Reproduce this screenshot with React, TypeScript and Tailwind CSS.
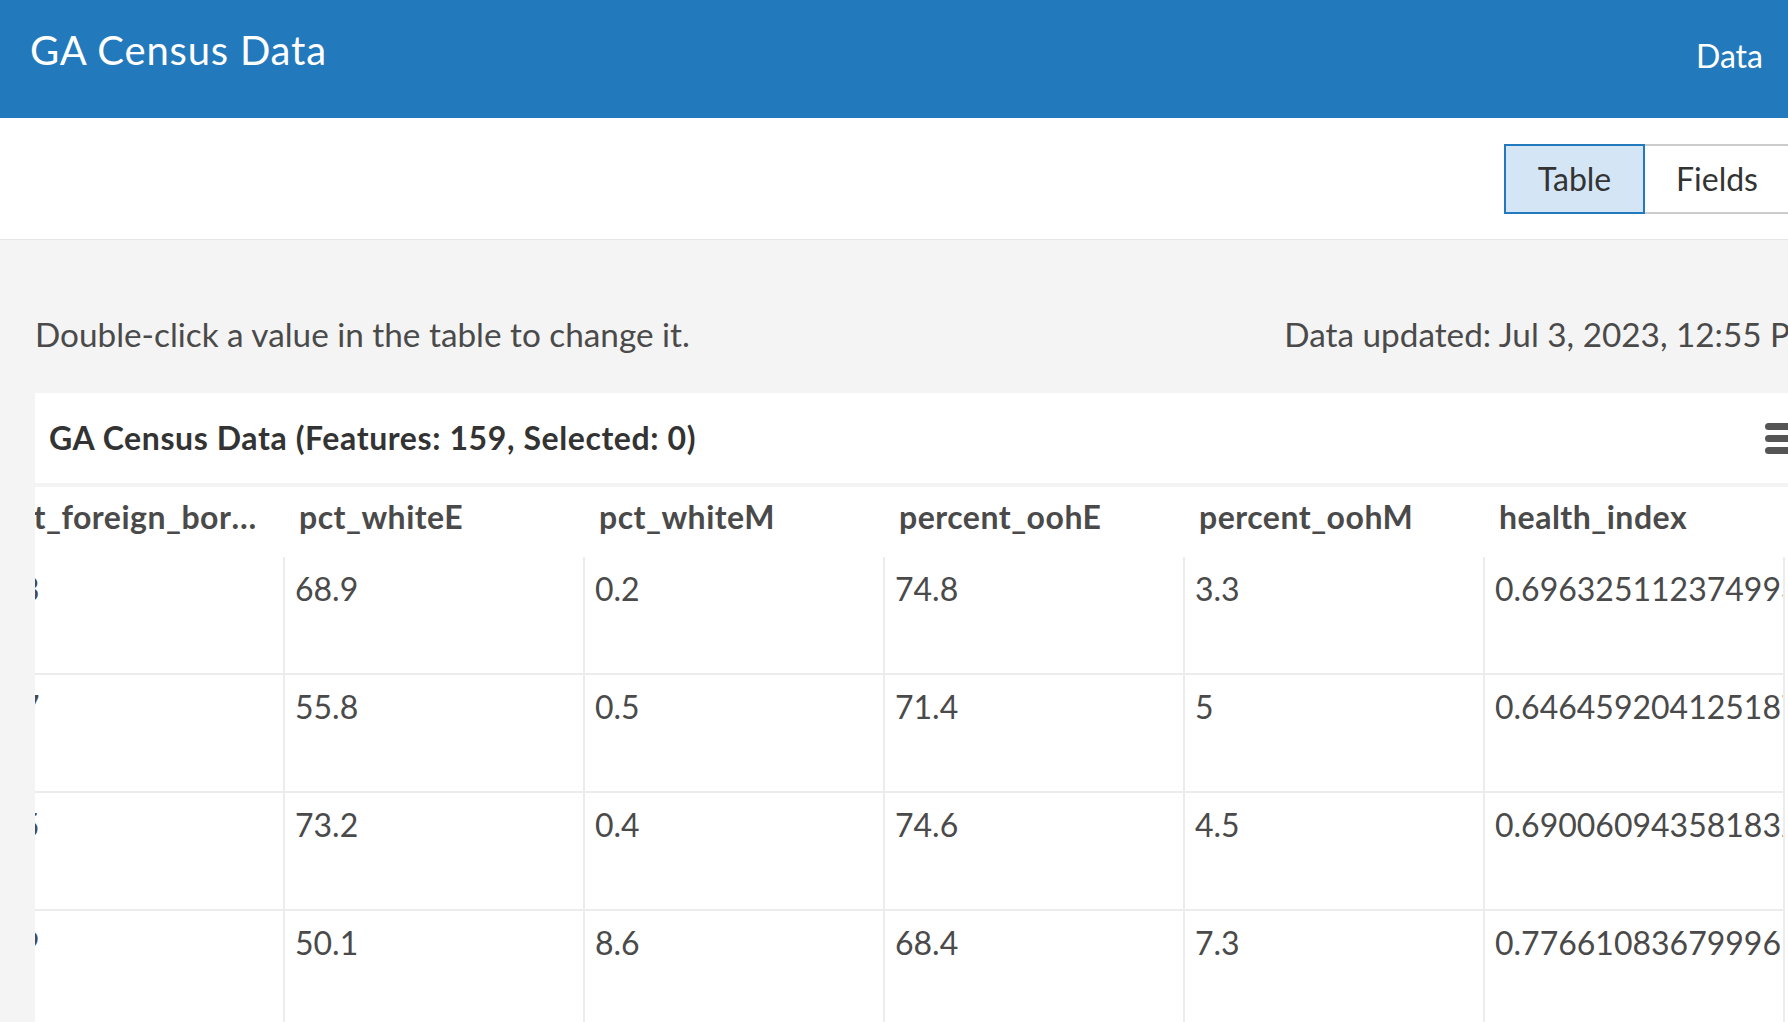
import React from 'react';

const BLUE = '#2279bb';

const columns = ['pct_foreign_bornE_pct', 'pct_whiteE', 'pct_whiteM', 'percent_oohE', 'percent_oohM', 'health_index'];

const rows = [
  ['2.3', '68.9', '0.2', '74.8', '3.3', '0.696325112374993'],
  ['4.7', '55.8', '0.5', '71.4', '5', '0.646459204125187'],
  ['1.5', '73.2', '0.4', '74.6', '4.5', '0.690060943581832'],
  ['6.9', '50.1', '8.6', '68.4', '7.3', '0.776610836799961'],
  ['3.1', '61.0', '0.9', '70.2', '2.8', '0.701223450981276'],
];

const HamburgerIcon = () => (
  <svg width="34" height="32" viewBox="0 0 34 32" fill="#555">
    <rect x="0" y="1" width="34" height="7" rx="3.5" />
    <rect x="0" y="13" width="34" height="7" rx="3.5" />
    <rect x="0" y="25" width="34" height="7" rx="3.5" />
  </svg>
);

export default function App() {
  return (
    <div className="w-[1788px] h-[1022px] overflow-hidden bg-[#f4f4f4] text-[#4a4a4a]" style={{ fontFamily: 'Lato, "Noto Sans", sans-serif' }}>
      {/* Header */}
      <header style={{ backgroundColor: BLUE }} className="h-[118px] flex justify-between text-white pl-[30px] pr-[25px]">
        <h1 className="text-[40px] leading-none pt-[30px] font-normal tracking-[0.8px]">GA Census Data</h1>
        <span className="text-[32px] leading-none pt-[40px]">Data</span>
      </header>

      <div className="w-[1844px]">
        {/* Toolbar */}
        <div className="h-[122px] bg-white border-b border-[#e6e6e6] flex items-center justify-end pr-[53px]">
          <div className="flex h-[70px]">
            <button className="w-[141px] h-full bg-[#d4e6f5] border-2 border-[#2279bb] text-[32px] text-[#333]">Table</button>
            <button className="w-[146px] h-full bg-white border-y-2 border-r-2 border-[#cccccc] text-[32px] text-[#333]">Fields</button>
          </div>
        </div>

        {/* Content */}
        <div className="px-[35px]">
          <div className="flex justify-between items-start h-[153px] pt-[74px] text-[33.3px] leading-[40px] text-[#4a4a4a]">
            <span>Double-click a value in the table to change it.</span>
            <span className="-mr-[12px]">Data updated: Jul 3, 2023, 12:55 PM</span>
          </div>

          <div className="bg-white">
            <div className="h-[94px] flex items-center justify-between pl-[14px] pr-[10px] border-b-4 border-[#f4f4f4]">
              <span className="text-[32px] font-bold text-[#333] tracking-[0.6px]">GA Census Data (Features: 159, Selected: 0)</span>
              <HamburgerIcon />
            </div>

            <div className="overflow-hidden">
              <div className="-ml-[50px] w-max">
                <div className="flex h-[70px] items-center pb-[10px]">
                  {columns.map((c) => (
                    <div key={c} className="w-[300px] pl-[14px] pr-[16px] text-[32px] font-bold tracking-[0.5px] truncate">
                      {c}
                    </div>
                  ))}
                </div>
                {rows.map((r, i) => (
                  <div key={i} className="flex">
                    {r.map((v, j) => (
                      <div key={j} className="w-[300px] h-[118px] border-r-2 border-b-2 border-[#ececec] pl-[10px] pt-[16px] text-[32px] leading-none whitespace-nowrap overflow-hidden">
                        {v}
                      </div>
                    ))}
                  </div>
                ))}
              </div>
            </div>
          </div>
        </div>
      </div>
    </div>
  );
}
